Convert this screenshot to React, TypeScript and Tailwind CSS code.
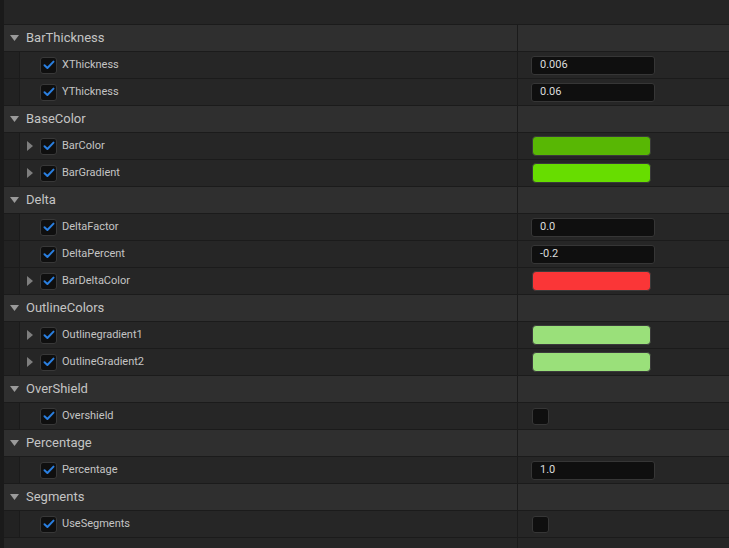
import React from "react";

type Prop =
  | { name: string; kind: "num"; value: string; expand?: boolean }
  | { name: string; kind: "color"; color: string; expand?: boolean }
  | { name: string; kind: "bool"; expand?: boolean };

type Group = { title: string; props: Prop[] };

const groups: Group[] = [
  {
    title: "BarThickness",
    props: [
      { name: "XThickness", kind: "num", value: "0.006" },
      { name: "YThickness", kind: "num", value: "0.06" },
    ],
  },
  {
    title: "BaseColor",
    props: [
      { name: "BarColor", kind: "color", color: "#58b704", expand: true },
      { name: "BarGradient", kind: "color", color: "#67dd00", expand: true },
    ],
  },
  {
    title: "Delta",
    props: [
      { name: "DeltaFactor", kind: "num", value: "0.0" },
      { name: "DeltaPercent", kind: "num", value: "-0.2" },
      { name: "BarDeltaColor", kind: "color", color: "#fa3637", expand: true },
    ],
  },
  {
    title: "OutlineColors",
    props: [
      { name: "Outlinegradient1", kind: "color", color: "#9ae07a", expand: true },
      { name: "OutlineGradient2", kind: "color", color: "#9ae07a", expand: true },
    ],
  },
  { title: "OverShield", props: [{ name: "Overshield", kind: "bool" }] },
  { title: "Percentage", props: [{ name: "Percentage", kind: "num", value: "1.0" }] },
  { title: "Segments", props: [{ name: "UseSegments", kind: "bool" }] },
];

function CheckBox() {
  return (
    <div className="w-[17px] h-[17px] rounded-[3px] bg-[#0f0f0f] border border-[#383838] flex items-center justify-center">
      <svg width="12" height="10" viewBox="0 0 12 10">
        <path d="M1.5 5.2 L4.4 8 L10.5 1.6" fill="none" stroke="#2a7fe0" strokeWidth="2" strokeLinecap="round" strokeLinejoin="round" />
      </svg>
    </div>
  );
}

function HeaderRow({ title }: { title: string }) {
  return (
    <div className="flex h-[27px] border-t border-[#1b1b1b] bg-[#2f2f2f]">
      <div className="w-[513px] flex items-center">
        <svg width="9" height="6" viewBox="0 0 9 6" className="ml-[6px]">
          <path d="M0 0 H9 L4.5 6 Z" fill="#9a9a9a" />
        </svg>
        <span className="ml-[7px] text-[13px] text-[#c4c4c4]">{title}</span>
      </div>
      <div className="flex-1 border-l border-[#1b1b1b]" />
    </div>
  );
}

function PropRow({ p }: { p: Prop }) {
  return (
    <div className="flex h-[27px] border-t border-[#1b1b1b] bg-[#262626]">
      <div className="w-[513px] flex">
        <div className="w-[16px] bg-[#222222] border-r border-[#1b1b1b]" />
        <div className="flex items-center">
          <div className="w-[13px] flex justify-end">
            {p.expand && (
              <svg width="6" height="10" viewBox="0 0 6 10">
                <path d="M0 0 L6 5 L0 10 Z" fill="#7e7e7e" />
              </svg>
            )}
          </div>
          <div className="ml-[7px]">
            <CheckBox />
          </div>
          <span className="ml-[5px] text-[11px] text-[#c4c4c4]">{p.name}</span>
        </div>
      </div>
      <div className="flex-1 border-l border-[#1b1b1b] flex items-center pl-[13px]">
        {p.kind === "num" && (
          <div className="w-[124px] h-[19px] rounded-[3px] bg-[#0f0f0f] border border-[#363636] flex items-center pl-[8px] text-[11px] text-[#dcdcdc]">
            {p.value}
          </div>
        )}
        {p.kind === "color" && (
          <div
            className="ml-[1px] w-[119px] h-[20px] rounded-[4px] border border-[#3a3a3a]"
            style={{ backgroundColor: p.color }}
          />
        )}
        {p.kind === "bool" && (
          <div className="ml-[1px] w-[17px] h-[17px] rounded-[3px] bg-[#0f0f0f] border border-[#363636]" />
        )}
      </div>
    </div>
  );
}

export default function App() {
  return (
    <div
      className="w-[729px] h-[548px] flex bg-[#262626] overflow-hidden"
      style={{ fontFamily: "Roboto, 'Liberation Sans', sans-serif" }}
    >
      <div className="w-[4px] bg-[#1a1a1a]" />
      <div className="flex-1 flex flex-col">
        <div className="h-[24px] bg-[#252525]" />
        {groups.map((g) => (
          <React.Fragment key={g.title}>
            <HeaderRow title={g.title} />
            {g.props.map((p) => (
              <PropRow key={p.name} p={p} />
            ))}
          </React.Fragment>
        ))}
        <div className="flex-1 flex border-t border-[#1b1b1b]">
          <div className="w-[513px]" />
          <div className="flex-1 border-l border-[#1b1b1b]" />
        </div>
      </div>
    </div>
  );
}
